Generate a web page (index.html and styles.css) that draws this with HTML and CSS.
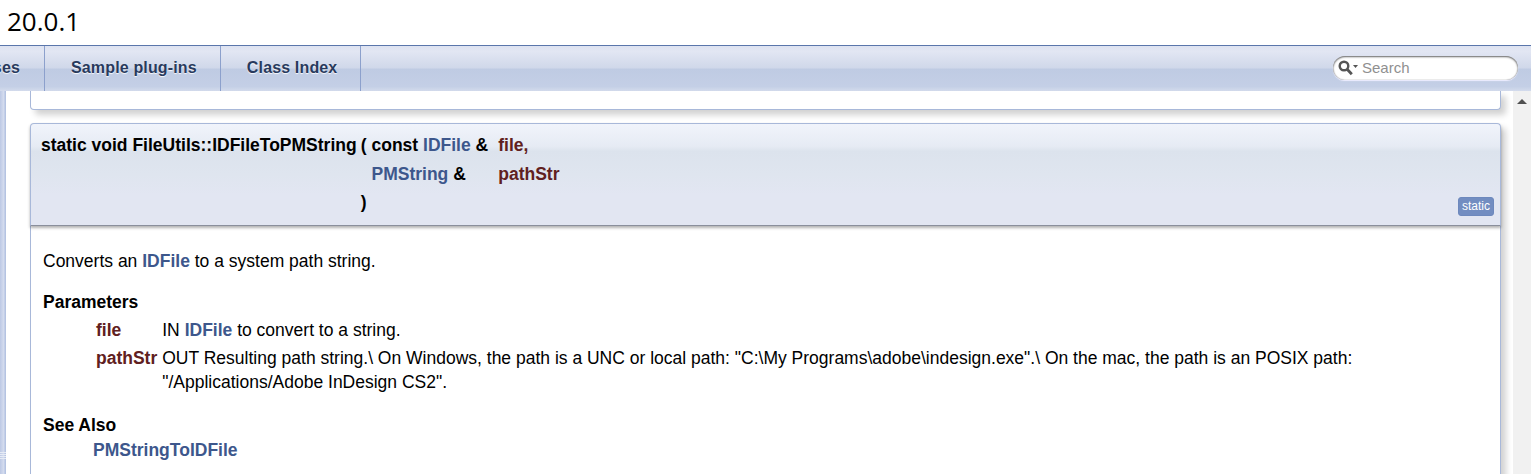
FILE: index.html
```html
<!doctype html>
<html lang="en">
  <head>
    <meta charset="UTF-8" />
    <title>20.0.1: FileUtils</title>
    <link rel="stylesheet" href="styles.css">
  </head>
  <body>
    <div class="project">20.0.1</div>
    <div class="tabs">
      <ul class="tablist">
        <li class="tab tab-cut"><a href="#">ses</a></li>
        <li class="tab"><a href="#">Sample plug-ins</a></li>
        <li class="tab"><a href="#">Class Index</a></li>
      </ul>
      <div class="searchbox">
        <svg class="search-icon" width="21" height="16" viewBox="0 0 21 16">
          <circle cx="7" cy="6" r="4.3" fill="none" stroke="#555" stroke-width="2.4" />
          <path d="M10.2 9.2l4.6 5" stroke="#555" stroke-width="2.8" />
          <path d="M16 5h5l-2.5 3z" fill="#555" />
        </svg>
        <span class="search-text">Search</span>
      </div>
    </div>
    <div class="main">
      <div class="splitter"><div class="grip"></div></div>
      <div class="content">
        <div class="prev-card"></div>
        <div class="memitem">
          <div class="memproto">
            <table class="memname">
              <tr>
                <td class="mname">static void FileUtils::IDFileToPMString</td>
                <td>(</td>
                <td class="ptype">const <a href="#">IDFile</a> &amp;</td>
                <td class="pname">file,</td>
              </tr>
              <tr>
                <td></td>
                <td></td>
                <td class="ptype"><a href="#">PMString</a> &amp;</td>
                <td class="pname">pathStr</td>
              </tr>
              <tr class="last-row">
                <td></td>
                <td>)</td>
                <td></td>
                <td></td>
              </tr>
            </table>
            <span class="mlabel">static</span>
          </div>
          <div class="memdoc">
            <p class="intro">Converts an <a href="#">IDFile</a> to a system path string.</p>
            <div class="section-title">Parameters</div>
            <table class="params">
              <tr>
                <td class="paramname">file</td>
                <td>IN <a href="#">IDFile</a> to convert to a string.</td>
              </tr>
              <tr>
                <td class="paramname">pathStr</td>
                <td>OUT Resulting path string.\ On Windows, the path is a UNC or local path: "C:\My Programs\adobe\indesign.exe".\ On the mac, the path is an POSIX path: "/Applications/Adobe InDesign CS2".</td>
              </tr>
            </table>
            <div class="section-title seealso">See Also</div>
            <div class="seealso-link"><a href="#">PMStringToIDFile</a></div>
          </div>
        </div>
      </div>
      <div class="scrollbar"><div class="arrow-up"></div></div>
    </div>
  </body>
</html>
```

FILE: styles.css
```css
html, body {
  height: 100%;
}
body {
  margin: 0;
  overflow: hidden;
  background: #fff;
  color: #000;
  font-family: "Liberation Sans", Arial, sans-serif;
  font-size: 17.5px;
}
a {
  color: #3d578c;
  font-weight: bold;
  text-decoration: none;
}
.project {
  height: 45px;
  box-sizing: border-box;
  padding: 5px 0 0 7px;
  font-family: "Open Sans", sans-serif;
  font-size: 26px;
  line-height: 33px;
}
.tabs {
  display: flex;
  justify-content: space-between;
  align-items: center;
  height: 46px;
  box-sizing: border-box;
  border-top: 1px solid #5a76ab;
  background: linear-gradient(#dde2f0, #e2e6f3 12%, #d0d8ea 48%, #bfcbe3 52%, #c4cfe6 90%, #d3dbec 100%);
}
.tablist {
  display: flex;
  height: 100%;
  margin: 0;
  padding: 0;
  list-style: none;
}
.tab {
  display: flex;
  align-items: center;
  box-sizing: border-box;
  padding: 0 23px 1px 26px;
  border-right: 1px solid #8ca0cc;
}
.tab a {
  color: #283a5d;
  font-size: 16px;
  letter-spacing: 0.15px;
  text-shadow: 0 1px 1px rgba(255, 255, 255, 0.9);
}
.tab-cut {
  width: 45px;
  padding: 0 0 1px;
  justify-content: flex-end;
  overflow: hidden;
}
.tab-cut a {
  padding-right: 24px;
}
.searchbox {
  display: flex;
  align-items: center;
  gap: 4px;
  width: 185px;
  height: 24px;
  box-sizing: border-box;
  margin: 0 13px 2px 0;
  padding-left: 4px;
  background: #fff;
  border-radius: 12px;
  box-shadow: inset 0 1px 2px #666, inset 0 0 1px #888, 0 1px 1px #eef;
}
.search-icon {
  flex: none;
}
.search-text {
  color: #909090;
  font-size: 15px;
}
.main {
  display: flex;
  height: calc(100% - 91px);
}
.splitter {
  flex: none;
  display: flex;
  align-items: flex-end;
  width: 7px;
  box-sizing: border-box;
  background: linear-gradient(90deg, #bcc8e4, #d3dbee 50%, #aebedf 85%, #fff 86%);
}
.grip {
  width: 6px;
  height: 8px;
  margin-bottom: 14px;
  background: repeating-linear-gradient(#e6ebf5 0 1px, transparent 1px 2px);
}
.content {
  flex: 1;
  min-width: 0;
  box-sizing: border-box;
  padding-left: 23px;
  padding-right: 12px;
}
.prev-card {
  height: 18px;
  background: #fff;
  border: 1px solid #a8b8d9;
  border-top: 0;
  border-radius: 0 0 4px 4px;
  box-shadow: 5px 5px 6px rgba(0, 0, 0, 0.18);
}
.memitem {
  margin-top: 13px;
  border-radius: 4px;
  box-shadow: 5px 5px 6px rgba(0, 0, 0, 0.18);
}
.memproto {
  position: relative;
  height: 103px;
  box-sizing: border-box;
  padding: 7px 0 0 6px;
  border: 1px solid #a8b8d9;
  border-bottom-color: #8a8f9c;
  border-radius: 4px 4px 0 0;
  background: linear-gradient(#f1f4fb, #e6ebf4 22%, #dce3ed 27%, #dfe5ef 50%, #e2e6f2 70%);
  box-shadow: 0 2px 3px rgba(0, 0, 0, 0.3);
  font-weight: bold;
}
.memname {
  border-collapse: collapse;
}
.memname td {
  height: 29px;
  padding: 0 0 0 4px;
  white-space: nowrap;
}
.memname .last-row td {
  height: 27px;
}
.memname .ptype {
  padding: 0 10px 0 5px;
}
.memname .pname {
  padding-left: 0;
  color: #602020;
}
.mlabel {
  position: absolute;
  right: 6px;
  bottom: 9px;
  padding: 1px 3px 2px;
  background: #728dc1;
  border: 1px solid #6d88bd;
  border-radius: 3px;
  color: #fff;
  font-size: 12px;
  font-weight: normal;
  line-height: 14px;
}
.memdoc {
  height: 260px;
  padding: 23px 12px 10px 12px;
  border-left: 1px solid #a8b8d9;
  border-right: 1px solid #a8b8d9;
  background: #fff;
  line-height: 24px;
}
.intro {
  margin: 0 0 17px;
}
.section-title {
  font-weight: bold;
}
.params {
  border-collapse: collapse;
  margin: 1px 0 0 53px;
}
.params td {
  padding: 3px 0 1px 0;
  vertical-align: top;
}
.params .paramname {
  padding-right: 5px;
  color: #602020;
  font-weight: bold;
  white-space: nowrap;
}
.seealso {
  margin-top: 18px;
}
.seealso-link {
  margin: 1px 0 0 50px;
}
.scrollbar {
  flex: none;
  width: 18px;
  background: #f1f1f1;
}
.arrow-up {
  width: 0;
  margin: 8px 0 0 4px;
  border: 5px solid transparent;
  border-top: 0;
  border-bottom: 5px solid #505050;
}
```
